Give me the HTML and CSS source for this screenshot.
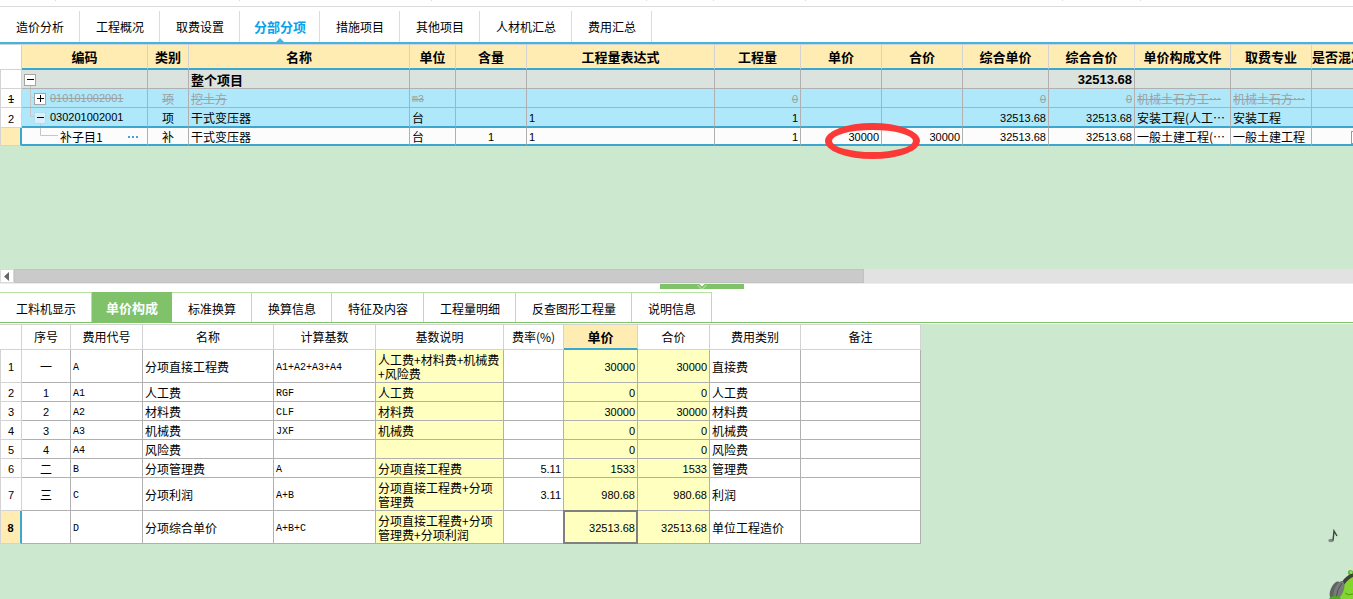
FILE: index.html
```html
<!DOCTYPE html>
<html lang="zh-CN">
<head>
<meta charset="utf-8">
<title>分部分项</title>
<link rel="stylesheet" href="styles.css">
</head>
<body>
<div class="ticks" aria-hidden="true"><i class="t56"></i><i class="t184"></i><i class="t192"></i><i class="t215"></i><i class="t67"></i><i class="t92"></i><i class="t257"></i><i class="t78"></i></div>

<nav class="tabs main-tabs">
  <button>造价分析</button><button>工程概况</button><button>取费设置</button><button class="active">分部分项</button><button>措施项目</button><button>其他项目</button><button>人材机汇总</button><button>费用汇总</button>
</nav>

<section class="upper">
  <table class="grid items">
    <colgroup><col class="w22"><col class="w126"><col class="w41"><col class="w221"><col class="w46"><col class="w71"><col class="w188"><col class="w86"><col class="w81"><col class="w81"><col class="w86"><col class="w86"><col class="w96"><col class="w81"><col class="w91"></colgroup>
    <thead>
      <tr><th class="rn"></th><th>编码</th><th>类别</th><th>名称</th><th>单位</th><th>含量</th><th>工程量表达式</th><th>工程量</th><th>单价</th><th>合价</th><th>综合单价</th><th>综合合价</th><th>单价构成文件</th><th>取费专业</th><th class="flush">是否混凝土子目</th></tr>
    </thead>
    <tbody>
      <tr class="total">
        <td class="rn"></td>
        <td class="tree"><svg class="lines" width="40" height="19"><path d="M8.500 15V19"/></svg><button class="toggle" aria-label="折叠"><svg width="10" height="10"><path d="M2 4.500H9"/></svg></button></td>
        <td></td><td class="cjk">整个项目</td><td></td><td></td><td></td><td></td><td></td><td></td><td></td><td class="r">32513.68</td><td></td><td></td><td></td>
      </tr>
      <tr class="removed">
        <td class="rn">1</td>
        <td class="tree level1"><svg class="lines" width="40" height="19"><path d="M8.500 0V19M8.500 8.500H12"/></svg><button class="toggle" aria-label="展开"><svg width="10" height="10"><path d="M2 4.500H9M5.500 1V8"/></svg></button><span>010101002001</span></td>
        <td class="c cjk">项</td><td class="cjk">挖土方</td><td class="code">m3</td><td></td><td></td><td class="r">0</td><td></td><td></td><td class="r">0</td><td class="r">0</td><td class="cjk">机械土石方工…</td><td class="cjk">机械土石方…</td><td></td>
      </tr>
      <tr class="parent">
        <td class="rn">2</td>
        <td class="tree level1"><svg class="lines" width="40" height="19"><path d="M8.500 0V8.500H12M18.500 14V19"/></svg><button class="toggle soft" aria-label="折叠"><svg width="10" height="10"><path d="M2 4.500H9"/></svg></button><span>030201002001</span></td>
        <td class="c cjk">项</td><td class="cjk">干式变压器</td><td class="cjk">台</td><td></td><td>1</td><td class="r">1</td><td></td><td></td><td class="r">32513.68</td><td class="r">32513.68</td><td class="cjk">安装工程(人工…</td><td class="cjk">安装工程</td><td></td>
      </tr>
      <tr class="current">
        <td class="rn"></td>
        <td class="tree level2 cjk"><svg class="lines" width="40" height="16"><path d="M18.500 0V7.500H36"/></svg><span>补子目1</span><button class="more" aria-label="更多"><i></i><i></i><i></i></button></td>
        <td class="c cjk">补</td><td class="cjk">干式变压器</td><td class="cjk">台</td><td class="c">1</td><td>1</td><td class="r">1</td><td class="r marked">30000<span class="ring"></span></td><td class="r">30000</td><td class="r">32513.68</td><td class="r">32513.68</td><td class="cjk">一般土建工程(…</td><td class="cjk">一般土建工程</td><td class="c"><input class="check" type="checkbox" aria-label="是否混凝土子目"></td>
      </tr>
    </tbody>
  </table>
</section>

<div class="scrollbar">
  <button class="arrow" aria-label="向左滚动"><svg width="12" height="13"><path d="M8 2V11L3 6.500Z" fill="#666"/></svg></button>
  <div class="thumb"></div>
</div>
<div class="splitter">
  <button class="handle" aria-label="收起"><svg width="12" height="6"><path d="M3.500 0H8.500L6 2.500Z" fill="#fff"/><path d="M1.500 1L6 5.500L10.500 1" fill="none" stroke="#c8ecb8"/></svg></button>
</div>

<nav class="tabs sub-tabs">
  <button>工料机显示</button><button class="active">单价构成</button><button>标准换算</button><button>换算信息</button><button>特征及内容</button><button>工程量明细</button><button>反查图形工程量</button><button>说明信息</button>
</nav>

<section class="lower">
  <table class="grid fees">
    <colgroup><col class="w22"><col class="w49"><col class="w72"><col class="w131"><col class="w102"><col class="w128"><col class="w60"><col class="w74"><col class="w72"><col class="w91"><col class="w120"></colgroup>
    <thead>
      <tr><th class="rn"></th><th>序号</th><th>费用代号</th><th>名称</th><th>计算基数</th><th>基数说明</th><th>费率(%)</th><th class="sorted">单价</th><th>合价</th><th>费用类别</th><th>备注</th></tr>
    </thead>
    <tbody>
      <tr class="tall"><td class="rn">1</td><td class="c cjk">一</td><td class="code">A</td><td class="cjk">分项直接工程费</td><td class="code">A1+A2+A3+A4</td><td class="y note">人工费+材料费+机械费+风险费</td><td></td><td class="y r">30000</td><td class="y r">30000</td><td class="cjk">直接费</td><td></td></tr>
      <tr><td class="rn">2</td><td class="c">1</td><td class="code">A1</td><td class="cjk">人工费</td><td class="code">RGF</td><td class="y note">人工费</td><td></td><td class="y r">0</td><td class="y r">0</td><td class="cjk">人工费</td><td></td></tr>
      <tr><td class="rn">3</td><td class="c">2</td><td class="code">A2</td><td class="cjk">材料费</td><td class="code">CLF</td><td class="y note">材料费</td><td></td><td class="y r">30000</td><td class="y r">30000</td><td class="cjk">材料费</td><td></td></tr>
      <tr><td class="rn">4</td><td class="c">3</td><td class="code">A3</td><td class="cjk">机械费</td><td class="code">JXF</td><td class="y note">机械费</td><td></td><td class="y r">0</td><td class="y r">0</td><td class="cjk">机械费</td><td></td></tr>
      <tr><td class="rn">5</td><td class="c">4</td><td class="code">A4</td><td class="cjk">风险费</td><td></td><td class="y"></td><td></td><td class="y r">0</td><td class="y r">0</td><td class="cjk">风险费</td><td></td></tr>
      <tr><td class="rn">6</td><td class="c cjk">二</td><td class="code">B</td><td class="cjk">分项管理费</td><td class="code">A</td><td class="y note">分项直接工程费</td><td class="r">5.11</td><td class="y r">1533</td><td class="y r">1533</td><td class="cjk">管理费</td><td></td></tr>
      <tr class="tall"><td class="rn">7</td><td class="c cjk">三</td><td class="code">C</td><td class="cjk">分项利润</td><td class="code">A+B</td><td class="y note">分项直接工程费+分项管理费</td><td class="r">3.11</td><td class="y r">980.68</td><td class="y r">980.68</td><td class="cjk">利润</td><td></td></tr>
      <tr class="tall picked"><td class="rn">8</td><td></td><td class="code">D</td><td class="cjk">分项综合单价</td><td class="code">A+B+C</td><td class="y note">分项直接工程费+分项管理费+分项利润</td><td></td><td class="y r focus">32513.68</td><td class="y r">32513.68</td><td class="cjk">单位工程造价</td><td></td></tr>
    </tbody>
  </table>
  <svg class="mascot" width="30" height="74" viewBox="0 0 30 74" aria-hidden="true">
    <ellipse cx="8" cy="15.500" rx="2.800" ry="1.800" fill="#858c88"/>
    <path d="M10 15.500L11 6L14 11" fill="none" stroke="#3c423f" stroke-width="1.400"/>
    <circle cx="27.500" cy="47.500" r="2.600" fill="#62b928"/><circle cx="28" cy="47.500" r="1.200" fill="#a5e36c"/>
    <path d="M30 52C21 53 17 61 16 74H30Z" fill="#82d62d"/>
    <path d="M19 57Q23 50 30 48.500V52Q25 54 21 60Z" fill="#404040"/>
    <path d="M22 68Q25 71 30 69" fill="none" stroke="#4a9a1c"/>
    <ellipse cx="12.500" cy="65.500" rx="5" ry="9.500" transform="rotate(22 12.500 65.500)" fill="#606361"/>
    <ellipse cx="16" cy="65" rx="4.500" ry="9.500" transform="rotate(22 16 65)" fill="#777b79"/>
    <path d="M13 73Q14 64 19 58" fill="none" stroke="#4c514e"/>
    <ellipse cx="12" cy="74" rx="6" ry="3" fill="#4fae1b"/>
  </svg>
</section>
</body>
</html>
```
FILE: styles.css
```css
* { box-sizing: border-box; }

body {
  margin: 0;
  min-height: 100vh;
  display: flex;
  flex-direction: column;
  overflow: hidden;
  background: #fff;
  color: #000;
  font: 12px/14px "Noto Sans CJK SC", sans-serif;
}

button {
  margin: 0;
  padding: 0;
  border: 0;
  background: none;
  color: inherit;
  font: inherit;
}

/* strip above the tabs */
.ticks {
  display: flex;
  height: 7px;
  border-bottom: 1px solid #dcdcdc;
}
.ticks i { flex: none; height: 1px; border-right: 1px solid #d8d8d8; }
.t56 { width: 56px; }
.t184 { width: 184px; }
.t192 { width: 192px; }
.t215 { width: 215px; }
.t67 { width: 67px; }
.t92 { width: 92px; }
.t257 { width: 257px; }
.t78 { width: 78px; }

/* tabs */
.tabs { display: flex; }
.tabs button { padding: 0 15px 0 16px; border-right: 1px solid #dcdcdc; }
.tabs .active { padding: 0 13px 0 14px; font-size: 13px; font-weight: 700; }

.main-tabs { padding-top: 4px; border-bottom: 2px solid #45b5de; }
.main-tabs button { height: 31px; position: relative; }
.main-tabs .active { color: #0aa2ea; }
.main-tabs .active::after {
  content: "";
  position: absolute;
  left: calc(50% - 4px);
  bottom: 0;
  border: 4px solid transparent;
  border-top: 0;
  border-bottom-color: #45b5de;
}

.sub-tabs { border-bottom: 1px solid #80c269; }
.sub-tabs button {
  height: 30px;
  padding-top: 2px;
  border-top: 1px solid #b5e2a0;
  border-right-color: #b5e2a0;
}
.sub-tabs .active { background: #80c269; border-color: #80c269; color: #fff; }

/* grids */
.grid {
  table-layout: fixed;
  border-collapse: separate;
  border-spacing: 0;
  background: #fff;
}
.grid th, .grid td {
  padding: 0 2px;
  border-right: 1px solid #b0b0b0;
  border-bottom: 1px solid #b0b0b0;
  white-space: nowrap;
  overflow: hidden;
}
.grid td { height: 19px; padding-top: 2px; text-align: left; font-family: "Liberation Sans", "Noto Sans CJK SC", sans-serif; font-size: 11px; }
.grid th { border-color: #d3d3d3; border-top: 1px solid #d3d3d3; height: 26px; }
.grid td.cjk, .grid td.note { font-family: "Noto Sans CJK SC", sans-serif; font-size: 12px; }
.grid td.note { white-space: normal; }
.grid td.code { padding-top: 3px; font-family: "Liberation Mono", "Noto Sans CJK SC", monospace; font-size: 10px; }
.grid .c { text-align: center; }
.grid .r { text-align: right; }
.grid td.rn {
  padding: 2px 0 0;
  text-align: center;
  border-left: 1px solid #d3d3d3;
  border-color: #d3d3d3;
  background: #fff;
}

.w22 { width: 22px; } .w41 { width: 41px; } .w46 { width: 46px; } .w49 { width: 49px; }
.w60 { width: 60px; } .w71 { width: 71px; } .w72 { width: 72px; } .w74 { width: 74px; }
.w81 { width: 81px; } .w86 { width: 86px; } .w91 { width: 91px; } .w96 { width: 96px; }
.w102 { width: 102px; } .w120 { width: 120px; } .w126 { width: 126px; } .w128 { width: 128px; }
.w131 { width: 131px; } .w188 { width: 188px; } .w221 { width: 221px; }

/* upper grid */
.upper { height: 225px; overflow: hidden; background: #cce8cf; position: relative; }
.items { width: 1383px; }
.items th { background: #ffecb3; border-bottom: 2px solid #3ba6d0; font-size: 13px; font-weight: 700; }
.items th.rn { background: #fff; border-bottom: 1px solid #d3d3d3; }
.items th.flush { padding: 0; text-align: left; }
.total td { background: #dae3de; }
.grid .total td { font-size: 13px; font-weight: 700; }
.removed td, .parent td { background: #aee8fa; }
.removed td { color: #a0a0a0; text-decoration: line-through; }
.removed td.rn { color: #000; }
.items .parent td { height: 20px; border-bottom: 2px solid #3ba6d0; }
.items .current td { height: 18px; background: #fcfcfc; border-bottom: 2px solid #3ba6d0; }
.items .parent td.rn { border-bottom: 1px solid #d3d3d3; }
.items .current td.rn { background: #ffecb3; border-right: 2px solid #3ba6d0; border-bottom: 1px solid #d3d3d3; }
.items .current .marked { overflow: visible; position: relative; }

.ring {
  position: absolute;
  z-index: 1;
  left: 24px;
  top: -5px;
  width: 95px;
  height: 36px;
  border: 7px solid #fb3a38;
  border-radius: 50%;
}

.items .tree { position: relative; padding-top: 0; }
.tree .lines { position: absolute; left: 0; top: 0; }
.lines path { fill: none; stroke: #c6c6c6; }
.tree > span { vertical-align: middle; }
.toggle {
  position: relative;
  width: 12px;
  height: 12px;
  border: 1px solid #a5a5a5;
  background: #fff;
  vertical-align: middle;
}
.toggle svg { display: block; }
.toggle path { stroke: #000; }
.toggle.soft { border-color: #b7dcec; background: #d9effa; }
.level1 .toggle { margin-left: 10px; margin-right: 4px; }
.grid .level2 { padding-left: 38px; }
.more { display: inline-flex; gap: 2px; margin-left: 25px; vertical-align: middle; }
.more i { width: 2px; height: 2px; background: #4a9fdc; }
.check {
  appearance: none;
  display: block;
  margin: 0 auto;
  width: 13px;
  height: 13px;
  border: 1px solid #999;
  background: #fff;
}

/* scrollbar and splitter */
.scrollbar { display: flex; height: 15px; background: #e2e2e2; border-bottom: 1px solid #ececec; }
.arrow { width: 14px; height: 14px; border: 1px solid #d9d9d9; background: #fff; }
.arrow svg { display: block; }
.thumb { width: 62.8%; background: #cacaca; border: 1px solid #c2c2c2; }
.splitter { display: flex; height: 8px; padding-left: 660px; }
.handle { display: flex; width: 84px; height: 5px; justify-content: center; background: #80c269; }

/* lower grid */
.lower { flex: 1; margin-top: 1px; position: relative; background: #cce8cf; }
.fees { width: 921px; }
.fees th { font-weight: 400; }
.fees th.sorted { background: #ffecb3; border-bottom: 2px solid #3ba6d0; font-size: 13px; font-weight: 700; }
.fees .tall td { height: 33px; }
.fees .y { background: #ffffc0; }
.fees .picked td.rn { background: #ffecb3; border-right: 2px solid #3ba6d0; font-weight: 700; }
.fees .focus { position: relative; overflow: visible; }
.fees .focus::after {
  content: "";
  position: absolute;
  inset: -1px -1px -1px -1px;
  border: 2px solid #808080;
}
.mascot { position: absolute; right: 0; bottom: 0; }
```
